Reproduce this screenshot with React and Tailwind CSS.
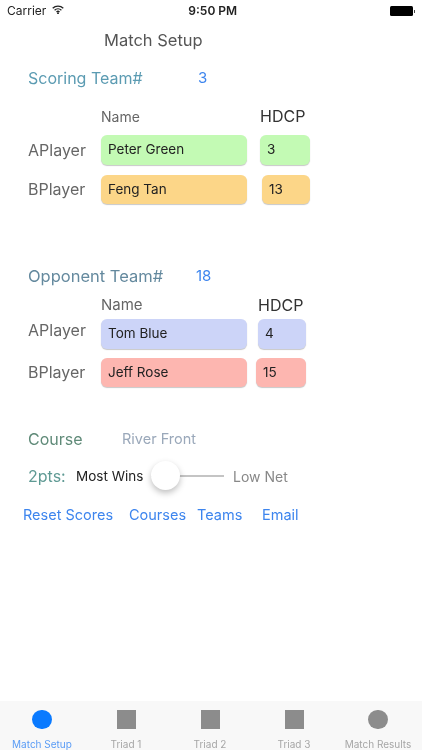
const font = { fontFamily: 'Inter, "Liberation Sans", sans-serif' };

function Field({ value, width, ml = 'ml-0', bg, height }) {
  return (
    <div className={`${width} ${ml} ${bg} ${height} rounded-[6px] flex items-center shadow-[0_1px_1px_rgba(0,0,0,0.22)] text-[13.5px] text-[#222] pl-[7px] pb-[1px]`}>
      {value}
    </div>
  );
}

function PlayerRow({ label, name, hdcp, bg, hdcpWidth, hdcpMl, height = 'h-[30px]', labelClass = '', className = '' }) {
  return (
    <div className={`flex items-center pl-[28px] ${className}`}>
      <div className={`w-[73px] text-[16px] text-[#666] ${labelClass}`}>{label}</div>
      <Field value={name} width="w-[146px]" bg={bg} height={height} />
      <Field value={hdcp} width={hdcpWidth} ml={hdcpMl} bg={bg} height={height} />
    </div>
  );
}

function TabItem({ label, round, active }) {
  return (
    <div className="w-[84px] flex flex-col items-center">
      <div className={`${round ? 'w-[20px] h-[20px] rounded-full' : 'w-[19px] h-[19px]'} ${active ? 'bg-[#0a7aff]' : 'bg-[#8c8c8c]'}`} />
      <div className={`mt-[9px] text-[10px] leading-[12px] whitespace-nowrap ${active ? 'text-[#5a9cf5]' : 'text-[#a6a6a6]'}`}>{label}</div>
    </div>
  );
}

export default function App() {
  return (
    <div style={font} className="w-[422px] h-[750px] bg-white flex flex-col overflow-hidden blur-[0.4px]">
      {/* status bar */}
      <div className="h-[22px] flex items-center text-[12px] text-[#222] pl-[7px] pr-[7px]">
        <span>Carrier</span>
        <svg className="ml-[6px] -mt-[3px]" width="12" height="9" viewBox="0 0 12 9" fill="none" stroke="#222" strokeWidth="1.3">
          <path d="M.7 3.2a7.6 7.6 0 0 1 10.6 0" />
          <path d="M2.6 5.2a4.9 4.9 0 0 1 6.8 0" />
          <path d="M4.5 7a2.2 2.2 0 0 1 3 0" />
          <circle cx="6" cy="8.2" r=".4" />
        </svg>
        <span className="ml-[124px] w-[50px] font-semibold whitespace-nowrap">9:50 PM</span>
        <div className="ml-auto flex items-center">
          <div className="w-[23px] h-[10px] bg-black rounded-[1.5px]" />
          <div className="w-[1px] h-[3px] bg-[#444] ml-[1px]" />
        </div>
      </div>

      <div className="mt-[8px] h-[20px] leading-[20px] pl-[104px] text-[16.5px] text-[#555]">Match Setup</div>

      <div className="mt-[18px] h-[20px] flex items-center pl-[28px]">
        <span className="w-[170px] text-[16px] text-[#5b9bb2]">Scoring Team#</span>
        <span className="text-[15px] text-[#3d85ee]">3</span>
      </div>

      <div className="mt-[18px] h-[20px] flex items-center pl-[101px]">
        <span className="w-[159px] text-[14px] text-[#666]">Name</span>
        <span className="text-[16px] text-[#333]">HDCP</span>
      </div>

      <PlayerRow className="mt-[9px]" label="APlayer" name="Peter Green" hdcp="3" bg="bg-[#c3fab4]" hdcpWidth="w-[50px]" hdcpMl="ml-[13px]" />
      <PlayerRow className="mt-[10px]" labelClass="-mt-[2px]" height="h-[29px]" label="BPlayer" name="Feng Tan" hdcp="13" bg="bg-[#fcd688]" hdcpWidth="w-[48px]" hdcpMl="ml-[15px]" />

      <div className="mt-[62px] h-[20px] flex items-center pl-[28px]">
        <span className="w-[168px] text-[16.5px] text-[#64899e]">Opponent Team#</span>
        <span className="text-[15px] text-[#3d85ee]">18</span>
      </div>

      <div className="mt-[9px] h-[20px] flex items-center pl-[101px]">
        <span className="w-[157px] text-[15px] text-[#666]">Name</span>
        <span className="text-[16px] text-[#333]">HDCP</span>
      </div>

      <PlayerRow className="mt-[4px]" labelClass="-mt-[8px]" label="APlayer" name="Tom Blue" hdcp="4" bg="bg-[#ccd4f8]" hdcpWidth="w-[48px]" hdcpMl="ml-[11px]" />
      <PlayerRow className="mt-[9px]" labelClass="-mt-[2px]" height="h-[29px]" label="BPlayer" name="Jeff Rose" hdcp="15" bg="bg-[#fdb6b0]" hdcpWidth="w-[50px]" hdcpMl="ml-[9px]" />

      <div className="mt-[42px] h-[20px] flex items-center pl-[28px]">
        <span className="w-[94px] text-[16px] text-[#5f8a78]">Course</span>
        <span className="text-[14.5px] text-[#9aa8ba]">River Front</span>
      </div>

      <div className="mt-[17px] h-[20px] flex items-center pl-[28px]">
        <span className="w-[48px] text-[16px] text-[#5f9a94]">2pts:</span>
        <span className="w-[76px] text-[13.5px] text-[#222] whitespace-nowrap">Most Wins</span>
        <div className="relative w-[73px] h-[2px] bg-[#c4c4c4] -ml-[1px]">
          <div className="absolute left-0 -top-[14px] w-[29px] h-[29px] rounded-full bg-white shadow-[0_3px_6px_rgba(0,0,0,0.25)]" />
        </div>
        <span className="ml-[9px] text-[14px] text-[#888] whitespace-nowrap">Low Net</span>
      </div>

      <div className="mt-[19px] h-[20px] flex items-center pl-[23px] text-[14.5px] text-[#3d85ee] whitespace-nowrap">
        <span className="w-[106px]">Reset Scores</span>
        <span className="w-[68px]">Courses</span>
        <span className="w-[65px]">Teams</span>
        <span>Email</span>
      </div>

      {/* tab bar */}
      <div className="mt-auto h-[49px] bg-[#f8f8f8] flex pt-[9px]">
        <TabItem label="Match Setup" round active />
        <TabItem label="Triad 1" />
        <TabItem label="Triad 2" />
        <TabItem label="Triad 3" />
        <TabItem label="Match Results" round />
      </div>
    </div>
  );
}
